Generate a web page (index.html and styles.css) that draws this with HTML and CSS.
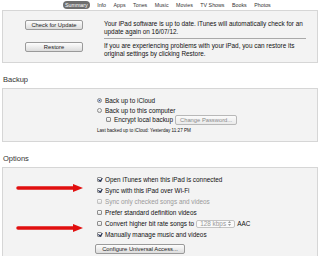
FILE: index.html
```html
<!DOCTYPE html>
<html lang="en">
<head>
    <meta charset="UTF-8">
    <title>iPad Summary</title>
    <link rel="stylesheet" href="styles.css">
</head>
<body>
    <div class="tabs">
        <span class="tab active">Summary</span>
        <span class="tab">Info</span>
        <span class="tab">Apps</span>
        <span class="tab">Tones</span>
        <span class="tab">Music</span>
        <span class="tab">Movies</span>
        <span class="tab">TV Shows</span>
        <span class="tab">Books</span>
        <span class="tab">Photos</span>
    </div>

    <section class="box version-box">
        <div class="btn-col">
            <button class="btn btn-wide">Check for Update</button>
            <button class="btn btn-wide">Restore</button>
        </div>
        <div class="msg-col">
            <p class="msg">Your iPad software is up to date. iTunes will automatically check for an<br>update again on 16/07/12.</p>
            <div class="divider"></div>
            <p class="msg">If you are experiencing problems with your iPad, you can restore its<br>original settings by clicking Restore.</p>
        </div>
    </section>

    <h2 class="section-title">Backup</h2>
    <section class="box backup-box">
        <div class="row"><span class="radio checked"></span>Back up to iCloud</div>
        <div class="row"><span class="radio"></span>Back up to this computer</div>
        <div class="row indent"><span class="check"></span>Encrypt local backup <button class="btn btn-disabled">Change Password...</button></div>
        <div class="row small">Last backed up to iCloud: Yesterday 11:27 PM</div>
    </section>

    <h2 class="section-title">Options</h2>
    <section class="box options-box">
        <div class="row"><span class="check checked"></span>Open iTunes when this iPad is connected</div>
        <div class="row"><span class="check checked"></span>Sync with this iPad over Wi-Fi</div>
        <div class="row disabled"><span class="check"></span>Sync only checked songs and videos</div>
        <div class="row"><span class="check"></span>Prefer standard definition videos</div>
        <div class="row"><span class="check"></span>Convert higher bit rate songs to
            <span class="popup">128 kbps
                <svg class="popup-arrows" width="3" height="5" viewBox="0 0 3 5">
                    <path d="M0 2 L1.5 0 L3 2 Z M0 3 L1.5 5 L3 3 Z" fill="#999"/>
                </svg>
            </span> AAC</div>
        <div class="row"><span class="check checked"></span>Manually manage music and videos</div>
        <div class="row btn-row"><button class="btn">Configure Universal Access...</button></div>
    </section>

    <!-- annotation arrows drawn on top of the screenshot -->
    <svg class="arrow arrow-one" width="70" height="10" viewBox="0 0 70 10">
        <path d="M2 5 H60" stroke="#e10f0f" stroke-width="3.5" stroke-linecap="round"/>
        <path d="M57 1 L67 5 L57 9 Z" fill="#e10f0f"/>
    </svg>
    <svg class="arrow arrow-two" width="70" height="10" viewBox="0 0 70 10">
        <path d="M2 5 H60" stroke="#e10f0f" stroke-width="3.5" stroke-linecap="round"/>
        <path d="M57 1 L67 5 L57 9 Z" fill="#e10f0f"/>
    </svg>
</body>
</html>
```

FILE: styles.css
```css
body {
    margin: 0;
    background: #fff;
    font-family: 'Liberation Sans', Arial, sans-serif;
    font-size: 6.4px;
    color: #111;
    position: relative;
    width: 320px;
    height: 256px;
    overflow: hidden;
}

.tabs {
    display: flex;
    align-items: center;
    gap: 7.5px;
    height: 10px;
    padding-left: 63px;
    font-size: 5.3px;
    color: #333;
}

.tab.active {
    background: #6e6e6e;
    color: #fff;
    border-radius: 4px;
    padding: 1px 2px;
}

.box {
    margin: 0 2px;
    background: #f3f3f3;
    border: 1px solid #d6d6d6;
    box-sizing: border-box;
}

.version-box {
    height: 53px;
    display: flex;
    padding-top: 9px;
}

.btn-col {
    width: 101px;
    padding-left: 22px;
    box-sizing: border-box;
    display: flex;
    flex-direction: column;
    gap: 12px;
}

.btn {
    font-family: 'Liberation Sans', Arial, sans-serif;
    font-size: 5.8px;
    color: #222;
    background: linear-gradient(#fdfdfd, #dcdcdc);
    border: 1px solid #9a9a9a;
    border-radius: 2px;
    height: 10px;
    padding: 0 4px;
    line-height: 8px;
}

.btn-wide {
    width: 58px;
}

.msg-col {
    width: 212px;
}

.msg {
    margin: 0;
    line-height: 8px;
}

.divider {
    border-top: 1px solid #a9a9a9;
    margin: 2px 10px 3px 0;
}

.section-title {
    margin: 0;
    font-size: 7.5px;
    font-weight: normal;
    color: #333;
    padding: 13px 0 4px 3px;
    line-height: 8px;
}

.backup-box {
    height: 54px;
    padding: 7px 0 0 94px;
}

.row {
    display: flex;
    align-items: center;
    height: 9.5px;
}

.row.indent {
    padding-left: 9px;
}

.row.small {
    font-size: 4.6px;
    padding-top: 1px;
}

.row.disabled {
    color: #9a9a9a;
}

.radio,
.check {
    width: 5px;
    height: 5px;
    border: 1px solid #8d8d8d;
    background: linear-gradient(#fff, #ddd);
    margin-right: 3px;
    box-sizing: border-box;
    position: relative;
    flex-shrink: 0;
}

.radio {
    border-radius: 50%;
}

.check {
    border-radius: 1px;
}

.radio.checked {
    background: radial-gradient(circle, #3b4f80 35%, #b6c7e6 45%);
}

.check.checked::after {
    content: '';
    position: absolute;
    left: 1px;
    top: -1px;
    width: 1.5px;
    height: 3px;
    border: solid #1b2b55;
    border-width: 0 1px 1px 0;
    transform: rotate(40deg);
}

.row.disabled .check {
    border-color: #c2c2c2;
}

.btn-disabled {
    color: #8a8a8a;
    margin-left: 2px;
    background: linear-gradient(#fbfbfb, #eaeaea);
    border-color: #b8b8b8;
}

.options-box {
    height: 100px;
    padding: 6px 0 0 94px;
}

.options-box .row {
    height: 11px;
}

.popup {
    display: inline-flex;
    align-items: center;
    justify-content: space-between;
    width: 39px;
    height: 8px;
    margin: 0 2px;
    padding: 0 3px;
    box-sizing: border-box;
    border: 1px solid #c4c4c4;
    border-radius: 2px;
    background: #fafafa;
    color: #999;
}

.btn-row {
    padding-top: 3px;
}

.btn-row .btn {
    width: 90px;
    margin-left: -2px;
}

.arrow {
    position: absolute;
    left: 16px;
}

.arrow-one {
    top: 183px;
}

.arrow-two {
    top: 223px;
}
```
